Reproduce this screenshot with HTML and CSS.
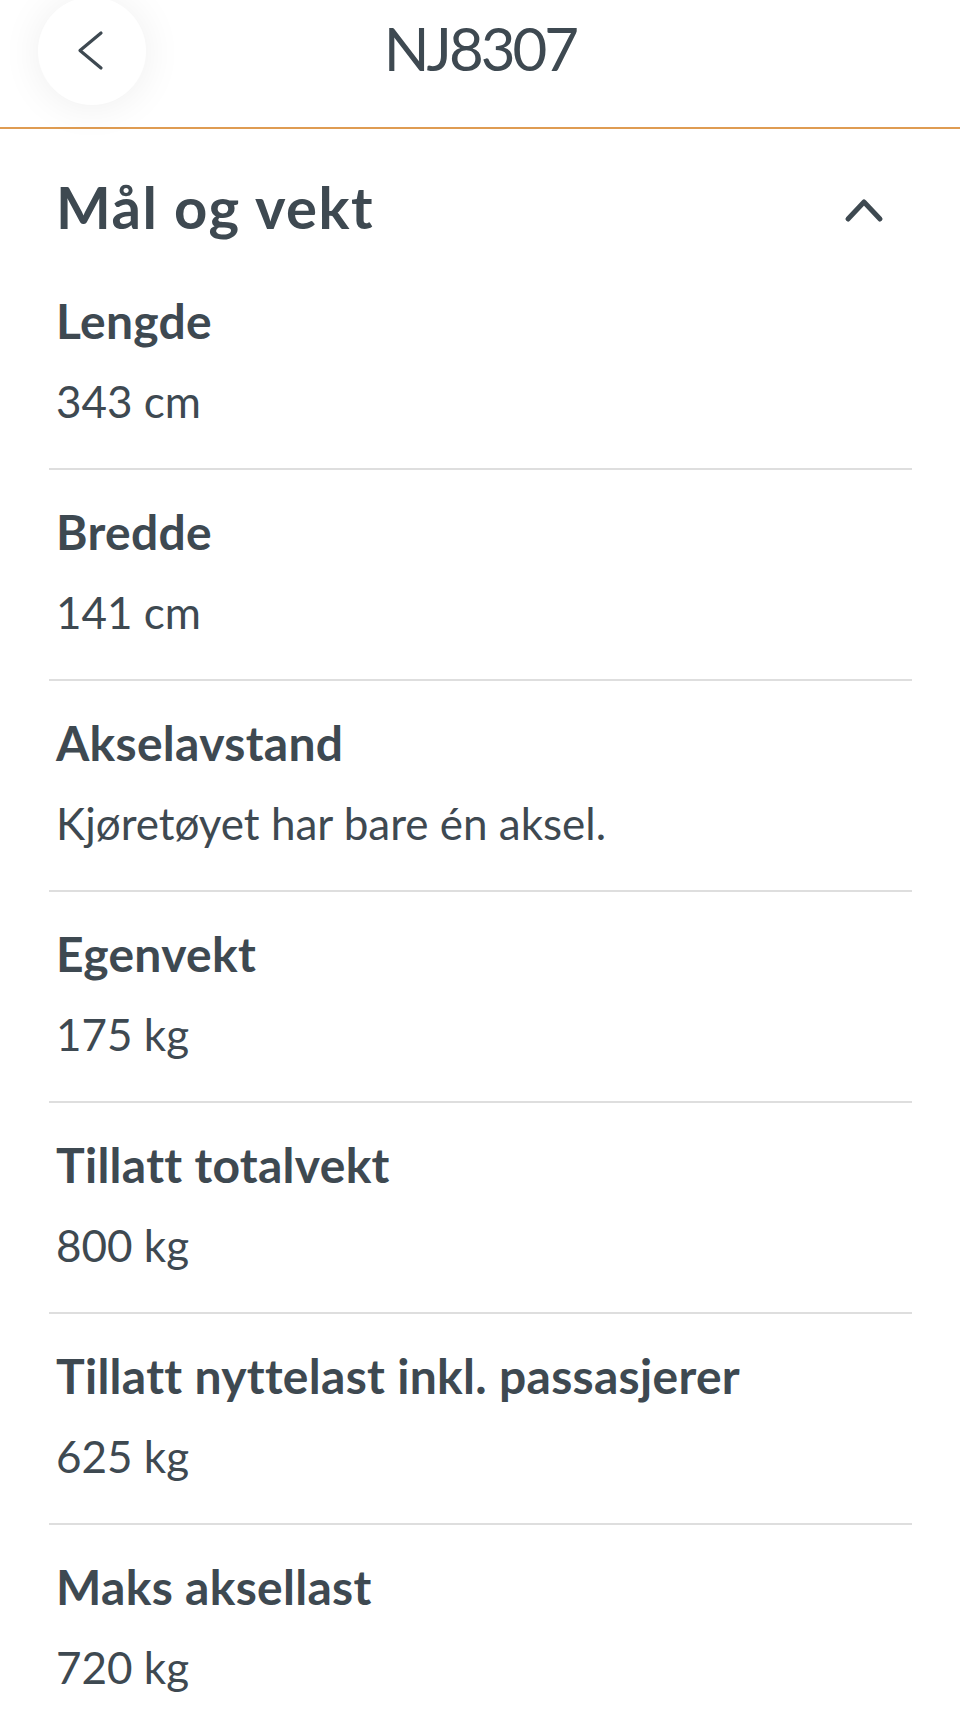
FILE: index.html
```html
<!DOCTYPE html>
<html lang="nb">
  <head>
    <meta charset="UTF-8" />
    <meta name="viewport" content="width=device-width, initial-scale=1.0" />
    <title>NJ8307</title>
    <link rel="stylesheet" href="styles.css">
  </head>
  <body>
    <header class="topbar">
      <div class="topbar-left">
        <button class="back-button" aria-label="Tilbake">
          <svg width="108" height="108" viewBox="0 0 108 108">
            <path d="M63 36 L42 53.5 L63 71" fill="none" stroke="#3e4951" stroke-width="3.2" stroke-linecap="round" stroke-linejoin="round" />
          </svg>
        </button>
      </div>
      <h1 class="title">NJ8307</h1>
      <div></div>
    </header>

    <section class="section">
      <div class="section-head">
        <h2>Mål og vekt</h2>
        <svg class="toggle" width="42" height="27" viewBox="0 0 42 27">
          <path d="M5 22 L21 5 L37 22" fill="none" stroke="#3e4951" stroke-width="5" stroke-linecap="round" stroke-linejoin="round" />
        </svg>
      </div>

      <div class="row">
        <div class="label">Lengde</div>
        <div class="value">343 cm</div>
      </div>
      <div class="row">
        <div class="label">Bredde</div>
        <div class="value">141 cm</div>
      </div>
      <div class="row">
        <div class="label">Akselavstand</div>
        <div class="value">Kjøretøyet har bare én aksel.</div>
      </div>
      <div class="row">
        <div class="label">Egenvekt</div>
        <div class="value">175 kg</div>
      </div>
      <div class="row">
        <div class="label">Tillatt totalvekt</div>
        <div class="value">800 kg</div>
      </div>
      <div class="row">
        <div class="label">Tillatt nyttelast inkl. passasjerer</div>
        <div class="value">625 kg</div>
      </div>
      <div class="row">
        <div class="label">Maks aksellast</div>
        <div class="value">720 kg</div>
      </div>
    </section>
  </body>
</html>
```

FILE: styles.css
```css
body {
  margin: 0;
  background-color: white;
  color: #3e4951;
  font-family: Lato, "Open Sans", sans-serif;
  overflow: hidden;
}
.topbar {
  display: grid;
  grid-template-columns: 1fr auto 1fr;
  align-items: start;
  height: 127px;
  border-bottom: 2px solid #df9c52;
  box-sizing: content-box;
}
.topbar-left {
  padding-left: 38px;
}
.back-button {
  width: 108px;
  height: 108px;
  margin-top: -3px;
  padding: 0;
  border: none;
  border-radius: 50%;
  background-color: white;
  box-shadow: 0 2px 40px rgba(0, 0, 0, 0.07);
  cursor: pointer;
}
.back-button svg {
  display: block;
}
.title {
  margin: 12px 0 0;
  font-size: 60px;
  font-weight: 400;
  line-height: 72px;
  letter-spacing: -3px;
}
.section {
  margin: 0 48px 0 49px;
}
.section-head {
  display: flex;
  justify-content: space-between;
  align-items: center;
  margin-top: 44px;
  padding-left: 7px;
  padding-right: 27px;
}
.section-head h2 {
  margin: 0;
  font-size: 58px;
  font-weight: 700;
  line-height: 68px;
  letter-spacing: 1.5px;
}
.toggle {
  margin-top: 7px;
}
.row {
  padding: 34px 7px 39px;
  border-bottom: 2px solid #dedede;
}
.section-head + .row {
  padding-top: 52px;
}
.label {
  font-size: 48px;
  font-weight: 700;
  line-height: 56px;
  letter-spacing: 0.3px;
}
.value {
  margin-top: 24px;
  font-size: 44px;
  line-height: 56px;
}
```
